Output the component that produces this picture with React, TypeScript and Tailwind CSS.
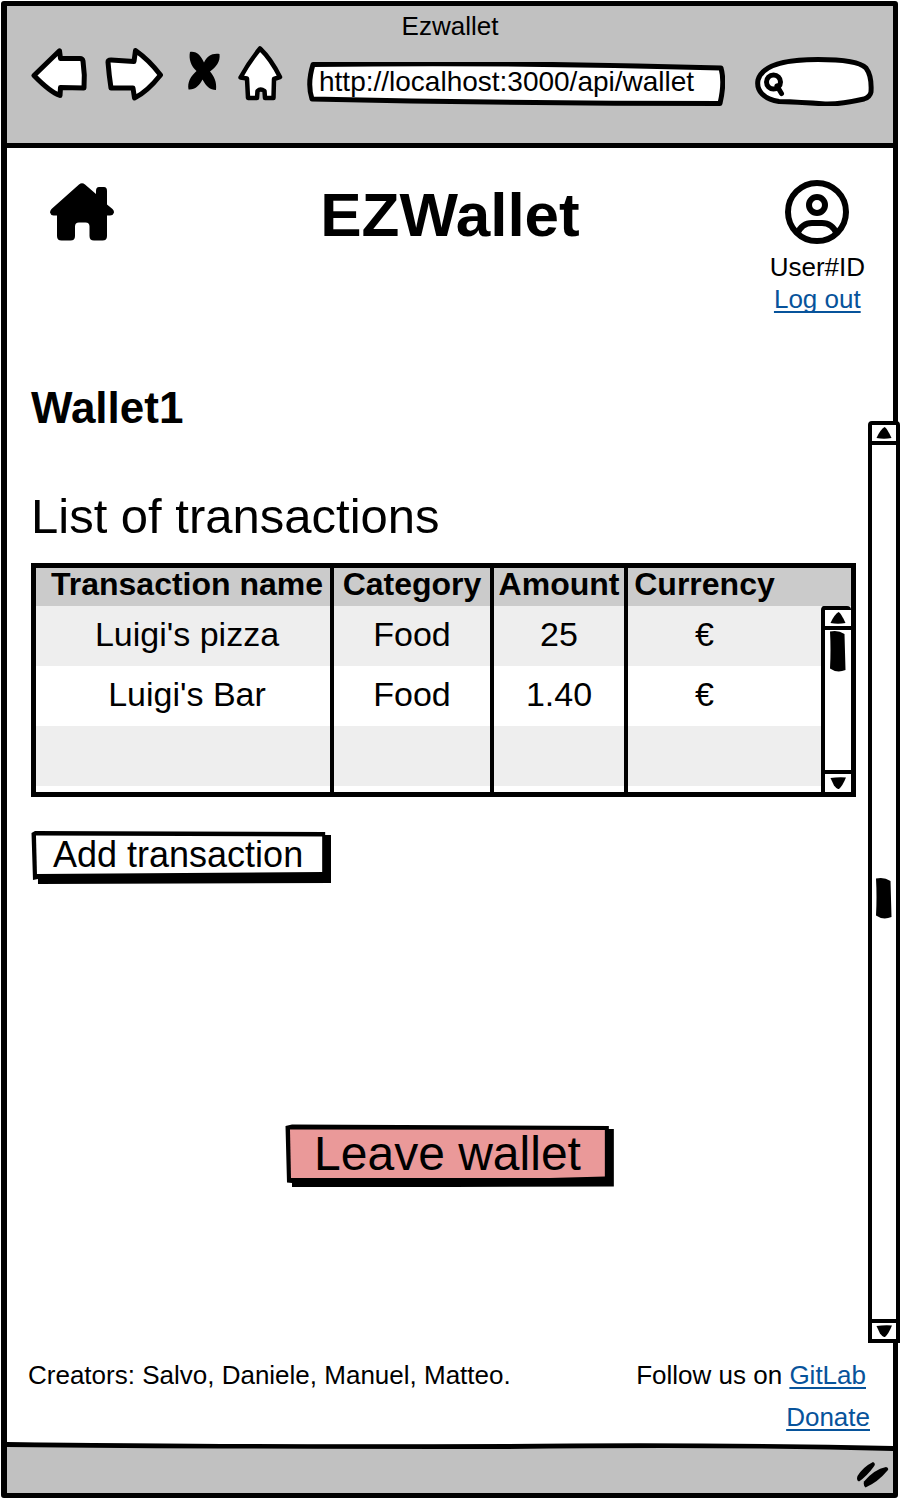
import type { ReactNode } from "react";

function BackIcon() {
  return (
    <svg viewBox="31 46 56 56" className="h-14 w-14" fill="#fff" stroke="#000" strokeWidth="5" strokeLinejoin="round" aria-hidden="true">
      <path d="M34 75.500 L59.500 50.800 L60.500 58.500 L80 58.500 Q82.500 58.500 83 61 L84.300 75 L84 88 L60.500 87.500 L60 95.500 Q50 92 34 75.500Z" />
    </svg>
  );
}

function ForwardIcon() {
  return (
    <svg viewBox="105 46 58 56" className="h-14 w-[58px]" fill="#fff" stroke="#000" strokeWidth="5" strokeLinejoin="round" aria-hidden="true">
      <path d="M108 62 Q108 60 111 60 L134 61.500 L135.500 50.500 Q149 60 160.500 75 Q147 92 134.500 98 L133 88 L111 88 Q109 75 108 62Z" />
    </svg>
  );
}

function StopIcon() {
  return (
    <svg viewBox="187 46 34 56" className="h-14 w-[34px]" aria-hidden="true">
      <path d="M190 52 C197 51 201 56 204 62.500 C207 56 212 53 219.500 54 C220.500 62 216 67 210 71.500 C214 76 217 82 216 90 C210 90 206 86 202.500 79.500 C199 86 195 90 188.500 89.500 C187 82 191 76 196.500 71 C191 66 188.500 59 190 52Z" />
    </svg>
  );
}

function BrowserHomeIcon() {
  return (
    <svg viewBox="237 46 46 56" className="h-14 w-[46px]" fill="#fff" stroke="#000" strokeWidth="4.500" strokeLinejoin="round" aria-hidden="true">
      <path d="M260 48.500 Q271 59 280 77 L274 79 L273.500 98 L265 98 L264.500 91 Q260.500 88 257.500 91 L257 98 L248 98 L247 78.500 L240.500 77.500 Q249 62 260 48.500Z" />
    </svg>
  );
}

function HouseIcon() {
  return (
    <svg viewBox="50 183 64 58" className="h-[58px] w-16" aria-hidden="true">
      <path d="M79 184.500 Q82 182 85 184.500 L96 194 V191 Q96 187 99 187 H104 Q107 187 107 191 V204.500 L112.500 209 Q114.500 211 113.800 213 Q113 215.500 110 215.500 H107 V236 Q107 240.500 102.500 240.500 H94 Q89.500 240.500 89.500 236 V226.500 Q89.500 222.500 85.500 222.500 H79 Q75 222.500 75 226.500 V236 Q75 240.500 70.500 240.500 H61.500 Q57 240.500 57 236 V215.500 H53.500 Q50.500 215 50 212.500 Q50 210.500 51.500 209Z" />
    </svg>
  );
}

function UserIcon() {
  return (
    <svg viewBox="786 180 64 64" className="h-16 w-16" fill="none" stroke="#000" strokeWidth="6" aria-hidden="true">
      <circle cx="818" cy="212" r="29" />
      <circle cx="818" cy="205" r="8" />
      <path d="M798 234 C802 225 808 223 813 223 H823 C828 223 834 225 838 234" />
    </svg>
  );
}

type BoxDrawing = { viewBox: string; children: ReactNode };

function SketchBox({ viewBox, children }: BoxDrawing) {
  return (
    <svg viewBox={viewBox} preserveAspectRatio="none" className="pointer-events-none absolute inset-0 h-full w-full" aria-hidden="true">
      {children}
    </svg>
  );
}

function ArrowUp() {
  return (
    <svg viewBox="0 0 16 12" className="h-3 w-4" aria-hidden="true">
      <path d="M8.500 0 Q11 1 15.500 11 Q8 12.500 0.500 11 Q4 3 8.500 0Z" />
    </svg>
  );
}

function ArrowDown() {
  return (
    <svg viewBox="0 0 16 12" className="h-3 w-4" aria-hidden="true">
      <path d="M0.500 1 Q8 0 16 0.500 Q12.500 9 9 12 Q7 12.500 4 8.500Z" />
    </svg>
  );
}

function Thumb() {
  return (
    <svg viewBox="0 0 18 42" className="h-[42px] w-[18px] shrink-0" aria-hidden="true">
      <path d="M1 1.500 Q9 -0.500 15.500 4 L16.500 40 Q8 43.500 1 38.500 Q2 20 1 1.500Z" />
    </svg>
  );
}

const creators = ["Salvo", "Daniele", "Manuel", "Matteo"];

const transactions = [
  { name: "Luigi's pizza", category: "Food", amount: "25", currency: "€" },
  { name: "Luigi's Bar", category: "Food", amount: "1.40", currency: "€" },
  { name: "", category: "", amount: "", currency: "" },
];

function BrowserBar() {
  return (
    <header className="border-b-[5px] border-black bg-[#c1c1c1] pb-[37px]">
      <p className="text-center leading-10">Ezwallet</p>
      <div className="flex h-[60px] items-start pr-[18px] pl-6">
        <button type="button" aria-label="Back"><BackIcon /></button>
        <button type="button" aria-label="Forward" className="ml-[18px]"><ForwardIcon /></button>
        <button type="button" aria-label="Stop" className="ml-6"><StopIcon /></button>
        <button type="button" aria-label="Browser home" className="ml-4"><BrowserHomeIcon /></button>
        <div className="relative ml-6 h-11 min-w-0 flex-1 self-end">
          <SketchBox viewBox="0 0 418 44">
            <path d="M6 2.500 Q210 0 414 6 Q418 20 413 41.500 Q210 41.500 5 37 Q0 22 6 2.500Z" fill="#fff" stroke="#000" strokeWidth="5" strokeLinejoin="round" />
          </SketchBox>
          <input
            type="text"
            aria-label="Address"
            defaultValue="http://localhost:3000/api/wallet"
            className="relative block h-10 w-full bg-transparent px-3 text-[28px] outline-none"
          />
        </div>
        <div className="relative ml-[30px] h-[50px] w-[120px] self-end">
          <SketchBox viewBox="755 56 120 50">
            <path d="M779 101.500 C764 99 756 91 758 80 C762 65 785 59.500 818 59.500 C848 59.500 861 63 866 68 Q872 76 871 92 Q870 97 864 99 Q840 104.500 825 104 Q800 102 779 101.500Z" fill="#fff" stroke="#000" strokeWidth="5" />
            <circle cx="773.500" cy="82" r="7" fill="none" stroke="#000" strokeWidth="5" />
            <path d="M777 86 L781.500 93.500" stroke="#000" strokeWidth="5" strokeLinecap="round" />
          </SketchBox>
          <input type="search" aria-label="Search" className="relative block h-full w-full bg-transparent pr-3 pl-8 outline-none" />
        </div>
      </div>
    </header>
  );
}

function TransactionTable() {
  return (
    <div className="relative mt-[23px] border-[5px] border-black">
      <table className="w-full table-fixed border-separate border-spacing-0 text-center">
        <colgroup>
          <col className="w-[298px]" />
          <col className="w-[160px]" />
          <col className="w-[134px]" />
          <col />
        </colgroup>
        <thead>
          <tr className="h-[38px] bg-[#cbcbcb] text-[32px] leading-8">
            <th className="border-r-4 border-black p-0 pl-2 align-top whitespace-nowrap">Transaction name</th>
            <th className="border-r-4 border-black p-0 align-top">Category</th>
            <th className="border-r-4 border-black p-0 align-top">Amount</th>
            <th className="p-0 pr-[70px] align-top">Currency</th>
          </tr>
        </thead>
        <tbody>
          {transactions.map((row, index) => (
            <tr key={index} className="h-[60px] text-[34px] leading-10 odd:bg-[#eee] even:bg-white">
              <td className="border-r-4 border-black p-0 pb-1 pl-2">{row.name}</td>
              <td className="border-r-4 border-black p-0 pb-1">{row.category}</td>
              <td className="border-r-4 border-black p-0 pb-1">{row.amount}</td>
              <td className="p-0 pr-[70px] pb-1">{row.currency}</td>
            </tr>
          ))}
        </tbody>
        <tfoot>
          <tr className="h-[6px]">
            <td className="border-r-4 border-black p-0" />
            <td className="border-r-4 border-black p-0" />
            <td className="border-r-4 border-black p-0" />
            <td className="p-0" />
          </tr>
        </tfoot>
      </table>
      <div className="absolute top-[38px] right-0 bottom-0 flex w-[30px] flex-col items-center rounded-t border-t-4 border-l-4 border-black bg-white">
        <div className="flex h-4 items-center"><ArrowUp /></div>
        <div className="flex w-full flex-1 flex-col items-center border-y-4 border-black">
          <Thumb />
        </div>
        <div className="flex h-[18px] items-center"><ArrowDown /></div>
      </div>
    </div>
  );
}

function PageScrollbar() {
  return (
    <div className="mt-[37px] -mr-[7px] flex w-8 shrink-0 flex-col items-center rounded-t border-4 border-black bg-white" aria-hidden="true">
      <div className="flex h-4 items-center"><ArrowUp /></div>
      <div className="flex w-full flex-1 flex-col items-center border-y-4 border-black">
        <div className="grow-[27]" />
        <Thumb />
        <div className="grow-[25]" />
      </div>
      <div className="flex h-4 items-center"><ArrowDown /></div>
    </div>
  );
}

const linkClass = "text-[#07539b] underline decoration-2 underline-offset-[3px] [text-decoration-skip-ink:none]";

export default function App() {
  return (
    <div className="flex min-h-screen flex-col bg-white pt-px pr-[2px] pb-[2px] pl-px font-['Liberation_Sans',Arial,sans-serif] text-[26px] text-black">
      <div className="flex flex-1 flex-col rounded-[3px] border-[5px] border-l-[6px] border-black">
        <BrowserBar />
        <main className="flex flex-1 flex-col">
          <div className="grid grid-cols-[1fr_auto_1fr] items-start px-[26px] pt-8">
            <a href="#home" aria-label="Home" className="mt-[3px] ml-[17px] justify-self-start"><HouseIcon /></a>
            <h1 className="text-[62px] leading-[70px] font-bold">EZWallet</h1>
            <div className="flex flex-col items-center justify-self-end pr-[2px] leading-8">
              <UserIcon />
              <span className="mt-[7px]">User#ID</span>
              <a href="#logout" className={linkClass}>Log out</a>
            </div>
          </div>
          <div className="mt-[69px] flex flex-1">
            <div className="flex min-w-0 flex-1 flex-col items-start pr-3 pl-6">
              <h2 className="text-[44px] leading-[48px] font-bold">Wallet1</h2>
              <h3 className="mt-[60px] text-[49px] leading-[48px]">List of transactions</h3>
              <div className="w-full"><TransactionTable /></div>
              <button type="button" className="relative mt-[34px] h-[53px] pr-[28px] pb-[5px] pl-[22px] text-[36px] leading-[48px]">
                <SketchBox viewBox="31 831 301 53">
                  <path d="M31.500 833 L35 831 L326 832 V835 H332 V883 L38 884 V879 L33 880Z" />
                  <path d="M36 835.500 L323 836.500 V872 L37 874Z" fill="#fff" />
                </SketchBox>
                <span className="relative">Add transaction</span>
              </button>
              <div className="mt-[240px] flex w-full justify-center pl-3">
                <button type="button" className="relative h-[63px] pr-[33px] pb-[3px] pl-[29px] text-[48px] leading-[60px]">
                  <SketchBox viewBox="285 1124 329 63">
                    <path d="M285.500 1126 L292 1124.500 L609 1126 V1129 H614 V1186.500 L292 1187.500 V1183 L287 1182.500Z" />
                    <path d="M290 1129.500 L605 1130 V1176.500 L550 1178 H291Z" fill="#ea9999" />
                  </SketchBox>
                  <span className="relative">Leave wallet</span>
                </button>
              </div>
            </div>
            <PageScrollbar />
          </div>
          <footer className="flex justify-between pt-[11px] pr-[23px] pb-1 pl-[21px] leading-[42px]">
            <p>Creators: {creators.join(", ")}.</p>
            <div className="flex flex-col items-end">
              <p className="pr-1">Follow us on <a href="#gitlab" className={linkClass}>GitLab</a></p>
              <a href="#donate" className={linkClass}>Donate</a>
            </div>
          </footer>
        </main>
        <div className="relative flex h-[51px] items-end justify-end bg-[#c1c1c1] pr-1 pb-[5px]">
          <svg viewBox="0 0 886 9" preserveAspectRatio="none" className="absolute top-0 right-0 left-0 h-[9px] w-full" aria-hidden="true">
            <path d="M0 0 H886 V5 Q780 1 500 2 Q200 3 0 0Z" fill="#fff" />
            <path d="M0 0 Q200 3 500 2 Q700 0 886 4 V9 Q720 4 500 7 Q200 7 0 5Z" />
          </svg>
          <svg viewBox="857 1461 32 27" className="h-[27px] w-8" aria-hidden="true">
            <path d="M873 1462 Q876.500 1463.500 873.500 1467 Q867 1476 859 1481.500 Q856 1481 857.500 1476 Q863 1467 873 1462Z" />
            <path d="M886 1467 Q889.500 1468 887.500 1470.500 Q878 1482 865.500 1487.500 Q863 1485 864 1481.500 Q874 1469.500 886 1467Z" />
          </svg>
        </div>
      </div>
    </div>
  );
}
